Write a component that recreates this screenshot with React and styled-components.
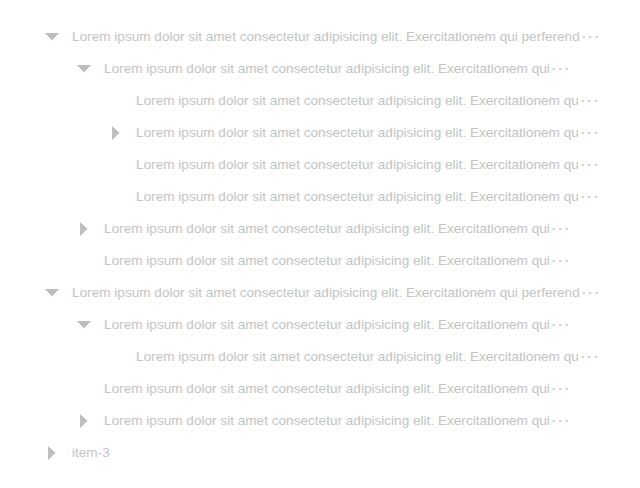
import styled, { createGlobalStyle } from "styled-components";

const GlobalStyle = createGlobalStyle`
  body {
    margin: 0;
    background: #ffffff;
    font-family: "Liberation Sans", Arial, sans-serif;
  }
`;

const BASE =
  "Lorem ipsum dolor sit amet consectetur adipisicing elit. Exercitationem qui";

// visible (already shortened) titles, one per depth
const SHORT = [BASE + " perferend", BASE, BASE.slice(0, -1)];

const tree = [
  {
    open: true,
    children: [
      {
        open: true,
        children: [{}, { children: [{}] }, {}, {}],
      },
      { children: [{}] },
      {},
    ],
  },
  {
    open: true,
    children: [{ open: true, children: [{}] }, {}, { children: [{}] }],
  },
  { title: "item-3", children: [{}] },
];

function Caret({ open }) {
  return open ? (
    <svg width="14" height="8" viewBox="0 0 14 8">
      <path d="M0 0 H14 L7 7.5 Z" fill="#bdbdbd" />
    </svg>
  ) : (
    <svg width="8" height="14" viewBox="0 0 8 14">
      <path d="M0 0 V14 L7.5 7 Z" fill="#bdbdbd" />
    </svg>
  );
}

function TreeRow({ node, level }) {
  const hasKids = node.children && node.children.length > 0;
  return (
    <Row $level={level}>
      <Switcher>{hasKids && <Caret open={node.open} />}</Switcher>
      <Title>
        {node.title || SHORT[level]}
        {!node.title && <Dots>···</Dots>}
      </Title>
    </Row>
  );
}

function renderNodes(nodes, level, out) {
  nodes.forEach((node) => {
    out.push(<TreeRow key={out.length} node={node} level={level} />);
    if (node.children && node.open) renderNodes(node.children, level + 1, out);
  });
  return out;
}

export default function App() {
  return (
    <>
      <GlobalStyle />
      <Tree>{renderNodes(tree, 0, [])}</Tree>
    </>
  );
}

const Tree = styled.div`
  width: 560px;
  padding: 21px 0 0 40px;
  display: flex;
  flex-direction: column;
`;

const Row = styled.div`
  display: flex;
  align-items: center;
  height: 32px;
  padding-left: ${(p) => p.$level * 32}px;
  min-width: 0;
`;

const Switcher = styled.span`
  flex: 0 0 24px;
  height: 24px;
  display: flex;
  align-items: center;
  justify-content: center;
  margin-right: 8px;
`;

const Title = styled.span`
  flex: 1;
  min-width: 0;
  font-size: 13.6px;
  line-height: 24px;
  color: #c4c4c4;
  white-space: nowrap;
  overflow: hidden;
`;

const Dots = styled.span`
  margin-left: 2px;
  letter-spacing: 2px;
  font-weight: bold;
  color: #cccccc;
`;
